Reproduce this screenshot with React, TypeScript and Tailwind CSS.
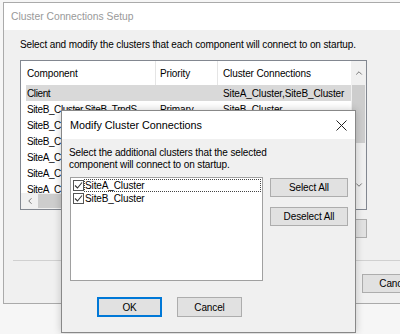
import { ChevronUp, ChevronDown, ChevronLeft } from "lucide-react"

type Row = {
  component: string
  priority: string
  clusters: string
}

const rows: Row[] = [
  { component: "Client", priority: "", clusters: "SiteA_Cluster,SiteB_Cluster" },
  { component: "SiteB_Cluster,SiteB_TrndS...", priority: "Primary", clusters: "SiteB_Cluster" },
  { component: "SiteB_Cluster,SiteB_Alarm...", priority: "Primary", clusters: "SiteB_Cluster" },
  { component: "SiteB_Cluster,SiteB_Report...", priority: "Primary", clusters: "SiteB_Cluster" },
  { component: "SiteA_Cluster,SiteA_TrndS...", priority: "Primary", clusters: "SiteA_Cluster" },
  { component: "SiteA_Cluster,SiteA_Alarm...", priority: "Primary", clusters: "SiteA_Cluster" },
  { component: "SiteA_Cluster,SiteA_Report...", priority: "Primary", clusters: "SiteA_Cluster" },
]

function WinButton({ label, className = "" }: { label: string; className?: string }) {
  return (
    <div
      className={`flex shrink-0 items-center justify-center whitespace-nowrap border border-[#adadad] bg-[#e1e1e1] text-black ${className}`}
    >
      {label}
    </div>
  )
}

function CheckItem({ label, focused }: { label: string; focused?: boolean }) {
  return (
    <div className="flex h-[13px] items-center">
      <div className="ml-[2px] flex h-[11px] w-[11px] shrink-0 items-center justify-center border border-[#555] bg-white">
        <svg width="9" height="9" viewBox="0 0 9 9">
          <path d="M1 4.5 L3.5 7 L8 1.5" fill="none" stroke="#333" strokeWidth="1.1" />
        </svg>
      </div>
      <div
        className={`flex h-[13px] flex-1 items-center leading-none ${
          focused ? "border border-dotted border-[#444]" : "border border-transparent"
        }`}
      >
        {label}
      </div>
    </div>
  )
}

export default function App() {
  return (
    <div
      className="relative h-[334px] w-[400px] overflow-hidden bg-[#f6f6f6] text-[10px] tracking-[-0.12px] text-black"
      style={{ fontFamily: '"Liberation Sans", Arial, sans-serif' }}
    >
      {/* background window */}
      <div className="ml-[3px] mt-[2px] flex h-[302px] w-[430px] flex-col border border-[#aaaaaa] bg-[#f0f0f0]">
        <div className="flex h-[27px] items-center bg-white pl-[7px] text-[10.3px] tracking-normal text-[#999]">
          Cluster Connections Setup
        </div>

        <div className="flex flex-col px-[16px]">
          <div className="mt-[7px] h-[16px] whitespace-nowrap leading-[16px]">
            Select and modify the clusters that each component will connect to on startup.
          </div>

          {/* list view */}
          <div className="mt-[7px] flex h-[150px] w-[347px] flex-col overflow-hidden border border-[#828790] bg-white">
            <div className="flex min-h-0 flex-1">
              <div className="flex min-w-0 flex-1 flex-col overflow-hidden">
                <div className="flex h-[24px] shrink-0 items-center whitespace-nowrap">
                  <div className="w-[134px] pl-[6px]">Component</div>
                  <div className="h-full w-px bg-[#e5e5e5]" />
                  <div className="w-[61px] pl-[4px]">Priority</div>
                  <div className="h-full w-px bg-[#e5e5e5]" />
                  <div className="pl-[5px]">Cluster Connections</div>
                </div>
                {rows.map((row, i) => (
                  <div
                    key={i}
                    className={`ml-[5px] flex h-[16px] shrink-0 items-center whitespace-nowrap ${
                      i === 0 ? "bg-[#d9d9d9]" : ""
                    }`}
                  >
                    <div className="w-[129px] overflow-hidden pl-[1px] tracking-[-0.4px]">{row.component}</div>
                    <div className="w-[62px] pl-[5px]">{row.priority}</div>
                    <div className="pl-[6px]">{row.clusters}</div>
                  </div>
                ))}
              </div>
              {/* vertical scrollbar */}
              <div className="flex w-[15px] shrink-0 flex-col bg-[#f0f0f0]">
                <div className="flex h-[24px] items-center justify-center">
                  <ChevronUp size={10} strokeWidth={2} color="#606060" />
                </div>
                <div className="mx-[1px] h-[58px] bg-[#cdcdcd]" />
                <div className="flex-1" />
                <div className="flex h-[17px] items-center justify-center">
                  <ChevronDown size={10} strokeWidth={2} color="#606060" />
                </div>
              </div>
            </div>
            {/* horizontal scrollbar */}
            <div className="flex h-[16px] shrink-0 bg-[#f0f0f0]">
              <div className="flex w-[17px] items-center justify-center">
                <ChevronLeft size={10} strokeWidth={2} color="#606060" />
              </div>
              <div className="my-[1px] w-[120px] bg-[#cdcdcd]" />
            </div>
          </div>

          <div className="mt-[9px] flex w-[347px] justify-end">
            <WinButton label="Modify..." className="h-[19px] w-[75px]" />
          </div>
        </div>

        <div className="ml-[9px] mt-[22px] h-px bg-[#d0d0d0]" />

        <div className="mt-[13px] flex pl-[358px]">
          <WinButton label="Cancel" className="h-[19px] w-[65px]" />
        </div>
      </div>

      {/* modal dialog */}
      <div className="absolute left-[61px] top-[110px] flex h-[223px] w-[295px] flex-col border border-[#888] bg-[#f0f0f0] shadow-[0_0_8px_rgba(0,0,0,0.2)]">
        <div className="flex h-[28px] shrink-0 items-center justify-between bg-white pl-[8px] pr-[8px] text-[10.8px] tracking-normal">
          <span>Modify Cluster Connections</span>
          <svg width="11" height="11" viewBox="0 0 11 11">
            <path d="M0.5 0.5 L10.5 10.5 M10.5 0.5 L0.5 10.5" stroke="#222" strokeWidth="1" fill="none" />
          </svg>
        </div>

        <div className="pl-[7px] pt-[8px] leading-[12px]">
          Select the additional clusters that the selected
          <br />
          component will connect to on startup.
        </div>

        <div className="mt-[6px] flex pl-[8px]">
          <div className="h-[104px] w-[193px] shrink-0 border border-[#a0a0a0] bg-white pr-[1px] pt-px">
            <CheckItem label="SiteA_Cluster" focused />
            <CheckItem label="SiteB_Cluster" />
          </div>
          <div className="ml-[7px] flex flex-col gap-[10px] pt-[1px]">
            <WinButton label="Select All" className="h-[19px] w-[78px]" />
            <WinButton label="Deselect All" className="h-[19px] w-[78px]" />
          </div>
        </div>

        <div className="mt-[16px] flex gap-[15px] pl-[35px]">
          <WinButton label="OK" className="h-[20px] w-[65px] !border-2 !border-[#0078d7]" />
          <WinButton label="Cancel" className="h-[20px] w-[65px]" />
        </div>
      </div>
    </div>
  )
}
